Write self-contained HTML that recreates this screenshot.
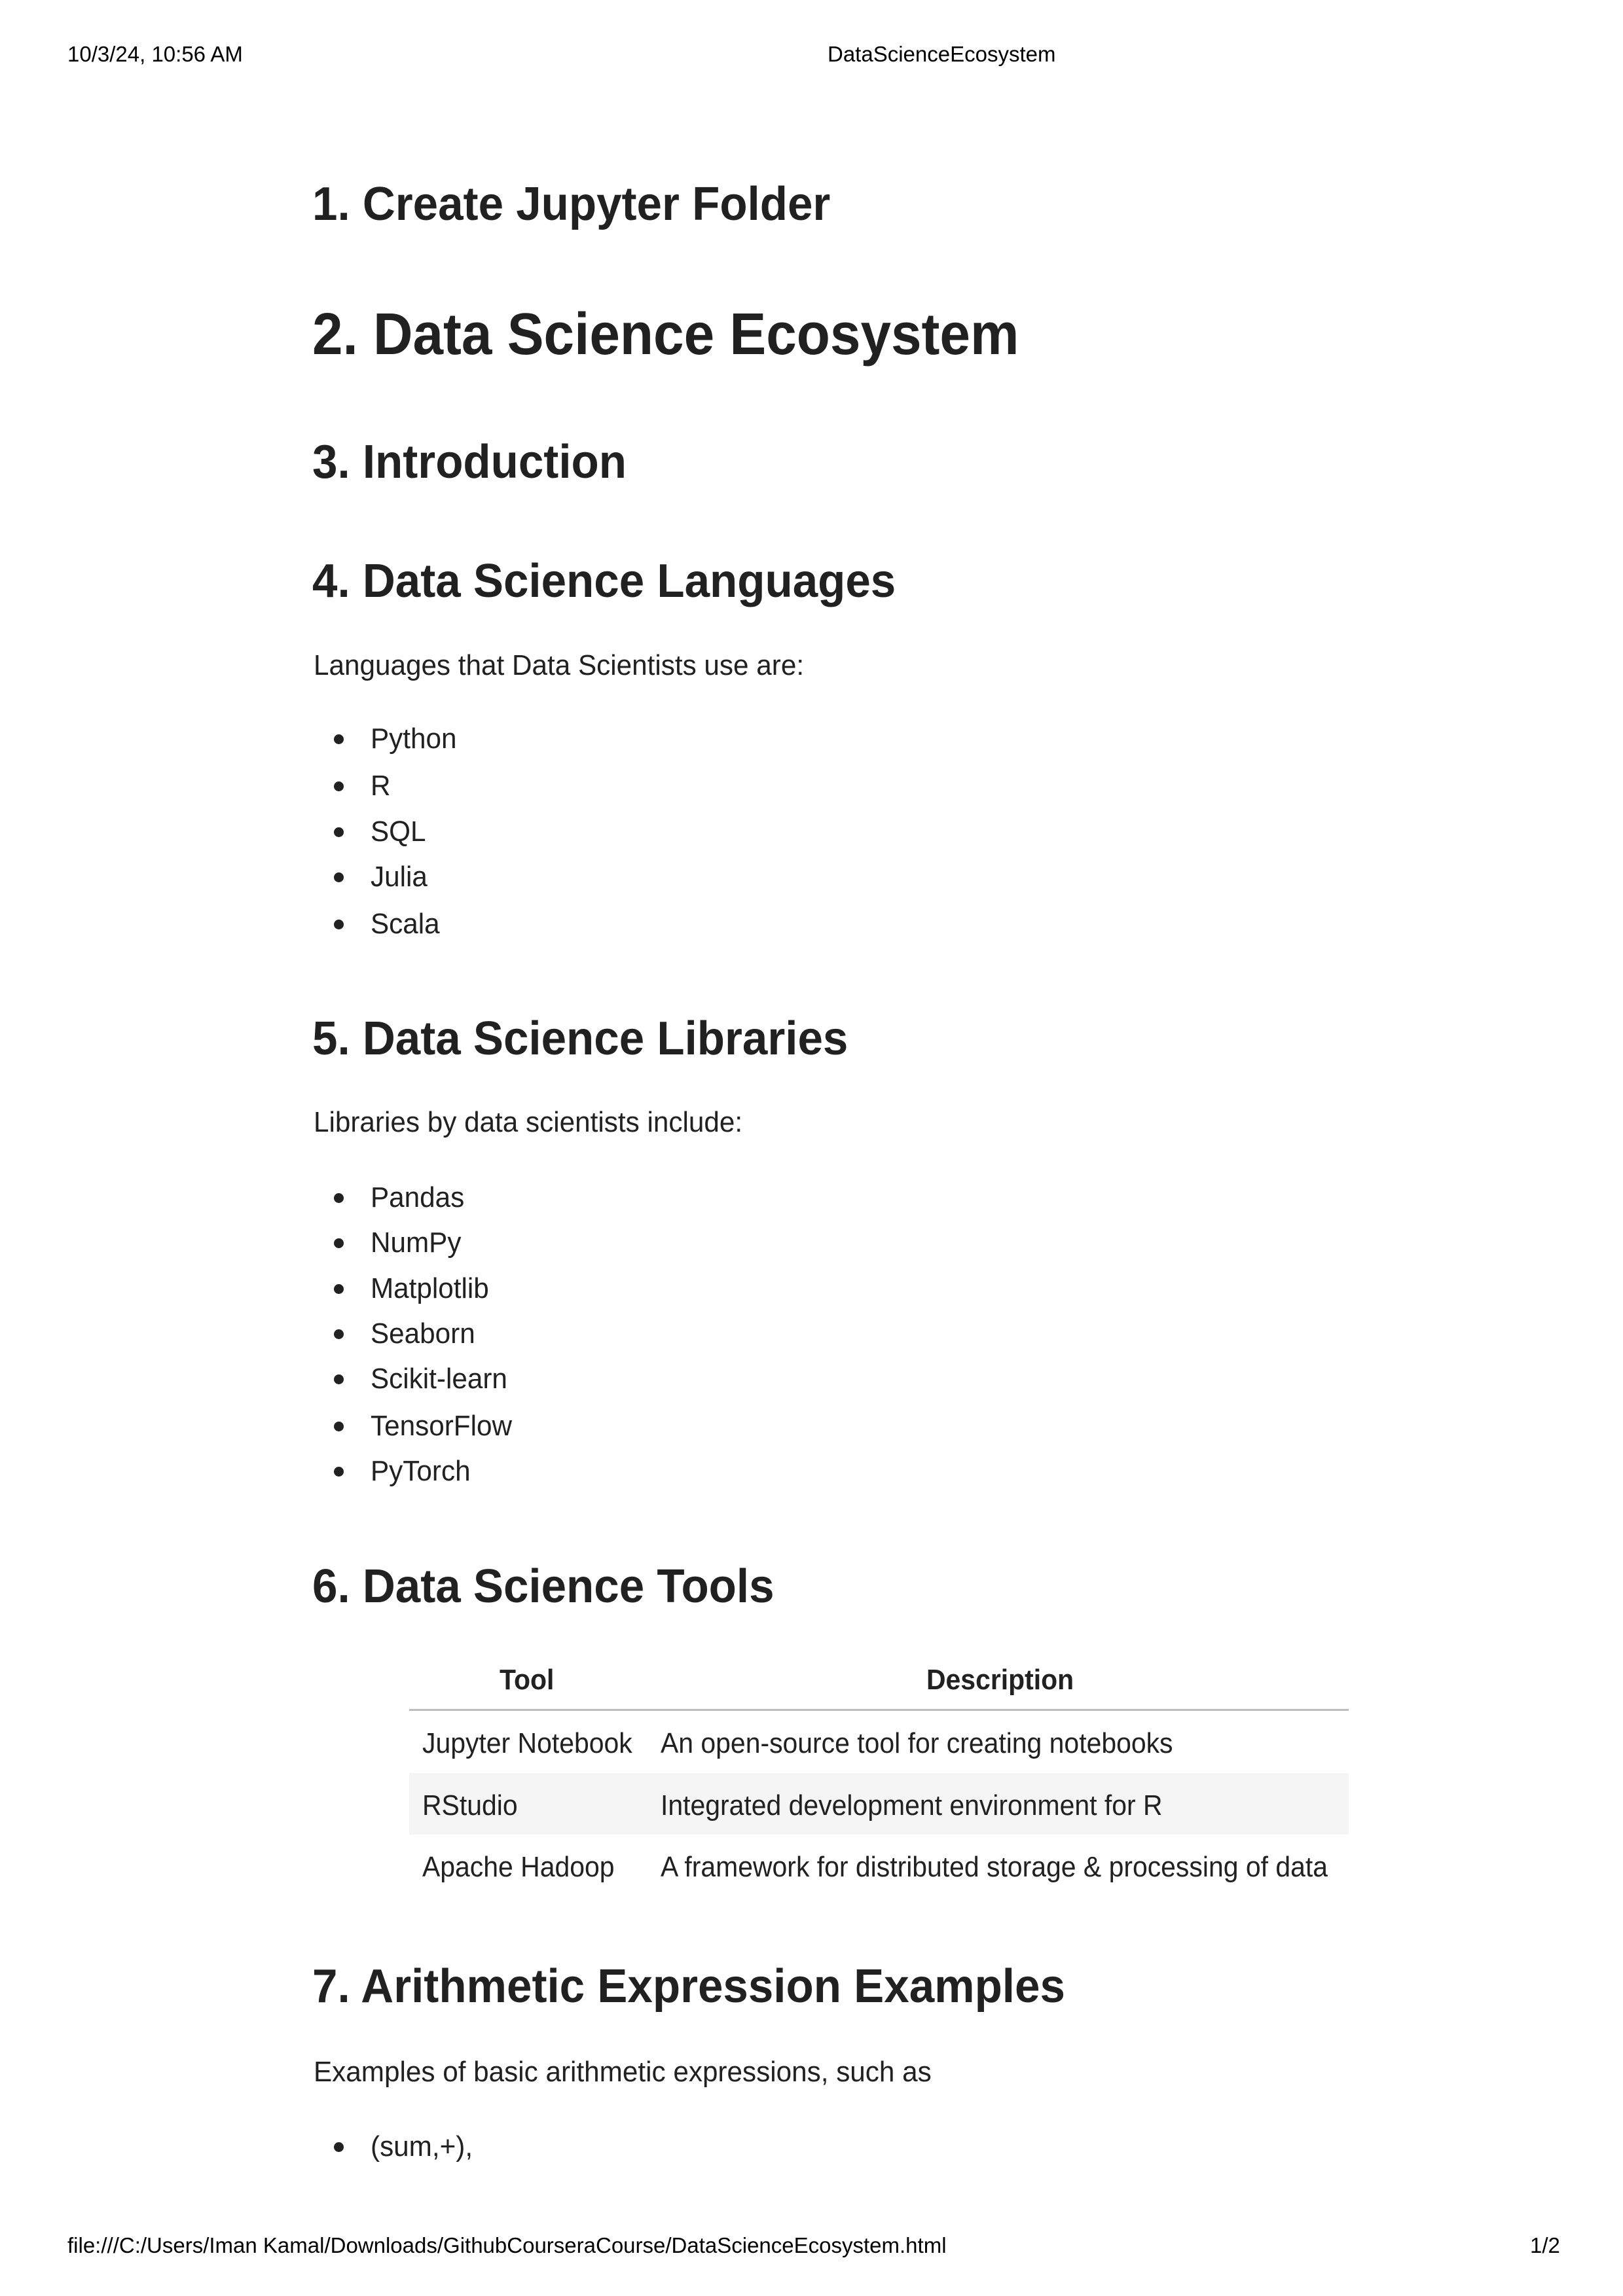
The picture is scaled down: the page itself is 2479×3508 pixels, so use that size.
<!DOCTYPE html>
<html><head><meta charset="utf-8"><style>
html,body{margin:0;padding:0;background:#fff;}
body{width:2479px;height:3508px;position:relative;overflow:hidden;color:#212121;font-family:"Liberation Sans",sans-serif;}
.a{position:absolute;white-space:nowrap;transform-origin:left center;}
.hd{font-size:33px;line-height:40px;color:#000;}
.h{font-weight:bold;line-height:100px;transform:scaleX(0.96);}
.h2{font-size:72px;}
.h1{font-size:90px;transform:scaleX(0.93);}
.p{font-size:44px;line-height:60px;transform:scaleX(0.96);}
.t{transform:scaleX(0.93);}
.b{position:absolute;width:15px;height:15px;border-radius:50%;background:#212121;left:510px;}
</style></head><body>
<div class="a hd" style="left:103px;top:63px">10/3/24, 10:56 AM</div>
<div class="a hd" style="left:1264px;top:63px">DataScienceEcosystem</div>

<div class="a h h2" style="left:477px;top:262px">1. Create Jupyter Folder</div>
<div class="a h h1" style="left:477px;top:461px">2. Data Science Ecosystem</div>
<div class="a h h2" style="left:477px;top:656px">3. Introduction</div>
<div class="a h h2" style="left:477px;top:838px">4. Data Science Languages</div>
<div class="a p" style="left:479px;top:987px">Languages that Data Scientists use are:</div>

<div class="b" style="top:1122px"></div><div class="a p" style="left:566px;top:1099px">Python</div>
<div class="b" style="top:1194px"></div><div class="a p" style="left:566px;top:1171px">R</div>
<div class="b" style="top:1264px"></div><div class="a p" style="left:566px;top:1241px">SQL</div>
<div class="b" style="top:1333px"></div><div class="a p" style="left:566px;top:1310px">Julia</div>
<div class="b" style="top:1405px"></div><div class="a p" style="left:566px;top:1382px">Scala</div>

<div class="a h h2" style="left:477px;top:1537px">5. Data Science Libraries</div>
<div class="a p" style="left:479px;top:1685px">Libraries by data scientists include:</div>

<div class="b" style="top:1823px"></div><div class="a p" style="left:566px;top:1800px">Pandas</div>
<div class="b" style="top:1892px"></div><div class="a p" style="left:566px;top:1869px">NumPy</div>
<div class="b" style="top:1962px"></div><div class="a p" style="left:566px;top:1939px">Matplotlib</div>
<div class="b" style="top:2031px"></div><div class="a p" style="left:566px;top:2008px">Seaborn</div>
<div class="b" style="top:2100px"></div><div class="a p" style="left:566px;top:2077px">Scikit-learn</div>
<div class="b" style="top:2172px"></div><div class="a p" style="left:566px;top:2149px">TensorFlow</div>
<div class="b" style="top:2241px"></div><div class="a p" style="left:566px;top:2218px">PyTorch</div>

<div class="a h h2" style="left:477px;top:2374px">6. Data Science Tools</div>

<div style="position:absolute;left:625px;top:2611px;width:1435px;height:3px;background:#bdbdbd"></div>
<div style="position:absolute;left:625px;top:2709px;width:1435px;height:94px;background:#f5f5f5"></div>
<div class="a p t" style="left:763px;top:2537px;font-weight:bold">Tool</div>
<div class="a p t" style="left:1415px;top:2537px;font-weight:bold">Description</div>
<div class="a p t" style="left:645px;top:2634px">Jupyter Notebook</div>
<div class="a p t" style="left:1009px;top:2634px">An open-source tool for creating notebooks</div>
<div class="a p t" style="left:645px;top:2729px">RStudio</div>
<div class="a p t" style="left:1009px;top:2729px">Integrated development environment for R</div>
<div class="a p t" style="left:645px;top:2823px">Apache Hadoop</div>
<div class="a p t" style="left:1009px;top:2823px">A framework for distributed storage &amp; processing of data</div>

<div class="a h h2" style="left:477px;top:2985px">7. Arithmetic Expression Examples</div>
<div class="a p" style="left:479px;top:3136px">Examples of basic arithmetic expressions, such as</div>
<div class="b" style="top:3273px"></div><div class="a p" style="left:566px;top:3250px">(sum,+),</div>

<div class="a hd" style="left:103px;top:3411px">file:///C:/Users/Iman Kamal/Downloads/GithubCourseraCourse/DataScienceEcosystem.html</div>
<div class="a hd" style="left:2337px;top:3411px">1/2</div>
</body></html>
